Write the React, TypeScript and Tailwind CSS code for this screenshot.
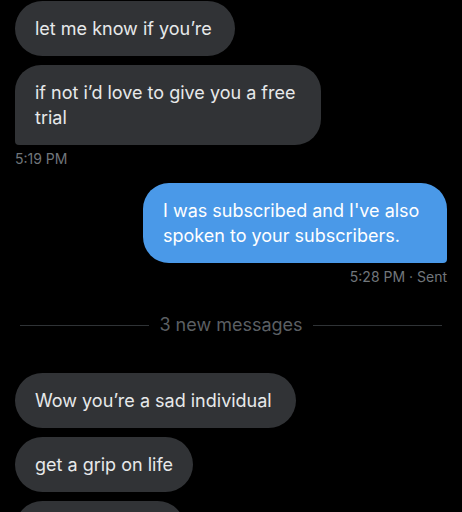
import React from "react";

const font = { fontFamily: '"Inter", "Liberation Sans", sans-serif' };

function Received({ children, w, last }: { children: React.ReactNode; w: string; last?: boolean }) {
  return (
    <div
      className={`${w} whitespace-nowrap bg-[#313336] text-[#e7e9ea] text-[18px] leading-[25px] px-5 py-[15px] ${
        last ? "rounded-[26px] rounded-bl-[4px]" : "rounded-[28px]"
      }`}
    >
      {children}
    </div>
  );
}

export default function App() {
  return (
    <div className="w-[462px] h-[512px] overflow-hidden bg-black" style={font}>
      <div className="flex flex-col pl-[15px] pr-[15px] pt-px">
        <div className="flex flex-col gap-[9px]">
          <Received w="w-[220px]">let me know if you’re</Received>
          <Received w="w-[306px]" last>
            if not i’d love to give you a free
            <br />
            trial
          </Received>
        </div>
        <div className="mt-1 text-[14px] leading-[20px] text-[#71767b]">5:19 PM</div>

        <div className="mt-[14px] flex flex-col items-end">
          <div className="w-[304px] whitespace-nowrap bg-[#4a99e8] text-white text-[18px] leading-[25px] px-5 py-[15px] rounded-[26px] rounded-br-[4px]">
            I was subscribed and I've also
            <br />
            spoken to your subscribers.
          </div>
          <div className="mt-1 text-[14px] leading-[20px] text-[#71767b]">
            5:28 PM · Sent
          </div>
        </div>

        <div className="mt-[26px] flex items-center gap-[10px] px-[5px]">
          <div className="flex-1 h-px bg-[#2f3336]" />
          <div className="text-[18px] leading-[24px] text-[#5b5f63]">3 new messages</div>
          <div className="flex-1 h-px bg-[#2f3336]" />
        </div>

        <div className="mt-[36px] flex flex-col gap-[9px]">
          <Received w="w-[281px]">Wow you’re a sad individual</Received>
          <Received w="w-[178px]">get a grip on life</Received>
          <Received w="w-[170px]">&nbsp;</Received>
        </div>
      </div>
    </div>
  );
}
